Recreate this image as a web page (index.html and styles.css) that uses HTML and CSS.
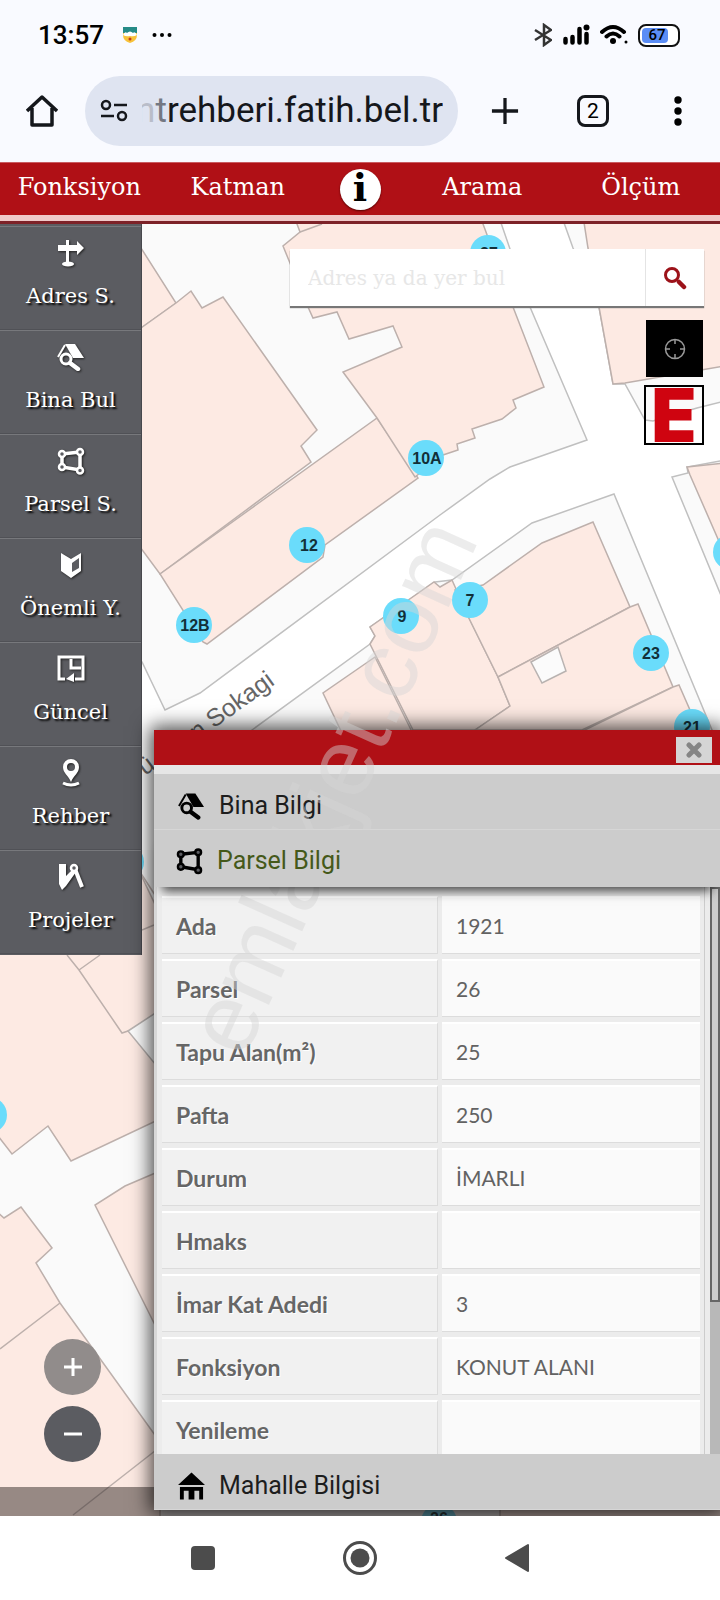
FILE: index.html
```html
<!DOCTYPE html>
<html lang="tr">
<head>
<meta charset="utf-8">
<meta name="viewport" content="width=device-width, initial-scale=1">
<title>Fatih Kent Rehberi</title>
<link rel="stylesheet" href="styles.css">
</head>
<body>
<svg class="defs" width="0" height="0" aria-hidden="true">
  <symbol id="i-house-search" viewBox="0 0 28 28">
    <path d="M8 1h10l9 14H16z" fill="currentColor"/>
    <path d="M8 2 1 14" stroke="currentColor" stroke-width="2" fill="none"/>
    <circle cx="9" cy="16" r="5" fill="none" stroke="currentColor" stroke-width="3"/>
    <path d="m13 20 8 6" stroke="currentColor" stroke-width="4.500" stroke-linecap="round"/>
  </symbol>
  <symbol id="i-parcel" viewBox="0 0 28 28">
    <path d="M5 7 23 5v18L5 20z" fill="none" stroke="currentColor" stroke-width="3.500"/>
    <g class="node"><circle cx="5" cy="7" r="3"/><circle cx="23" cy="5" r="3"/><circle cx="23" cy="23.500" r="3"/><circle cx="5" cy="20" r="3"/></g>
  </symbol>
</svg>
<div class="screen">
  <header class="status">
    <div class="status-side">
      <time class="clock">13:57</time>
      <svg class="shield" viewBox="0 0 16 18" aria-hidden="true"><path d="M1 1h14v8q0 6-7 8-7-2-7-8z" fill="#f8c23a"/><path d="M1 1h14v6H1z" fill="#268a87"/><path d="M1 9q2-4 4-2 3-3 6 0 2-2 4 2-3 2-7 1-4 1-7-1z" fill="#fff"/><circle cx="8" cy="13" r="1.500" fill="#c43c1b"/></svg>
      <svg class="more" viewBox="0 0 20 6" aria-hidden="true"><circle cx="2.500" cy="3" r="2"/><circle cx="10" cy="3" r="2"/><circle cx="17.500" cy="3" r="2"/></svg>
    </div>
    <div class="status-side">
      <svg width="18" height="24" viewBox="0 0 18 24" aria-hidden="true"><path d="M1 7l16 10-7 5V2l7 5L1 17" fill="none" stroke="#333" stroke-width="2.500"/></svg>
      <svg width="28" height="22" viewBox="0 0 28 22" aria-hidden="true"><g stroke="#000" stroke-width="4.500" stroke-linecap="round"><path d="M3.500 15v3.500M10.500 13v5.500M17.500 5v13.500M24.500 10v8.500"/></g><circle cx="24.500" cy="3.500" r="3"/></svg>
      <svg width="28" height="22" viewBox="0 0 28 22" aria-hidden="true"><path d="M2 8q11-10 22 0M6.500 12.500q6.500-6 13 0" fill="none" stroke="#000" stroke-width="4" stroke-linecap="round"/><circle cx="13" cy="17" r="3"/><circle cx="26" cy="18" r="1.500"/></svg>
      <span class="battery"><span>67</span></span>
    </div>
  </header>

  <div class="browser">
    <button class="plain" aria-label="Ana sayfa"><svg width="32" height="34" viewBox="0 0 32 34"><path d="M1 17 16 3l15 14M6 14v17h20V14" fill="none" stroke="#15171c" stroke-width="3.500" stroke-linejoin="round"/></svg></button>
    <div class="address">
      <svg width="28" height="24" viewBox="0 0 28 24" aria-hidden="true"><g fill="none" stroke="#15171c" stroke-width="2.500"><circle cx="6" cy="6" r="4"/><circle cx="22" cy="17" r="4"/><path d="M14 6h13M1 17h13"/></g></svg>
      <a class="url" href="#"><span class="cut">n</span><span class="half">t</span>rehberi.fatih.bel.tr</a>
    </div>
    <button class="plain" aria-label="Yeni sekme"><svg width="28" height="28" viewBox="0 0 30 30"><path d="M15 1v28M1 15h28" stroke="#15171c" stroke-width="3.500"/></svg></button>
    <button class="tabs-count">2</button>
    <button class="plain" aria-label="Menü"><svg width="8" height="30" viewBox="0 0 8 30"><circle cx="4" cy="4" r="3.700"/><circle cx="4" cy="15" r="3.700"/><circle cx="4" cy="26" r="3.700"/></svg></button>
  </div>

  <nav class="topnav">
    <a href="#">Fonksiyon</a>
    <a href="#">Katman</a>
    <a href="#" class="info" aria-label="Bilgi"><span>i</span></a>
    <a href="#">Arama</a>
    <a href="#">Ölçüm</a>
  </nav>

  <main class="stage">
    <svg class="map" viewBox="0 224 720 1292" preserveAspectRatio="xMinYMin slice" role="img" aria-label="Harita">
      <rect x="0" y="224" width="720" height="1292" fill="#fff"/>
      <g class="parcel">
        <path d="M-5 220H500L530 307 587 440 510 467 490 479 440 515 200 693 165 710 142 662-5 640z"/>
        <path d="M252 730 370 644 375 636 370 627 435 582 452 580 532 523 614 494 712 730 680 800H200z"/>
        <path d="M563 220 573 248 599 307 613 384 625 384 645 420 653 421 697 408 725 401V220z"/>
        <path d="M725 460 687 467 688 473 672 477 725 605z"/>
        <path class="ground" d="M-5 850H725V1520H-5z"/>
      </g>
      <g class="building">
        <path d="M120 215 176 303 120 343z"/>
        <path d="M120 343 176 303 191 291 202 308 223 297 317 430 301 446 311 462 160 574 120 520z"/>
        <path d="M160 574 377 418 418 478 325 545 323 557 207 644 203 642z"/>
        <path d="M294 216 300 232 283 246 308 307 313 318 337 312 349 339 393 326 402 347 343 372 377 418 415 477 443 455 458 450 457 444 475 438 472 429 502 419 516 408 513 400 544 387 513 307 486 232 480 216z"/>
        <path d="M583 216 588 248 599 307 613 384 625 383 725 366V216z"/>
        <path d="M687 467 725 463V555L690 475z"/>
        <path d="M370 627 434 582 440 587 452 580 469 618 498 677 510 706 475 730 413 730 370 644 375 636z"/>
        <path d="M375 657 323 693 350 750H421z"/>
        <path d="M455 590 498 677 630 607 593 522 542 543 483 585z"/>
        <path d="M498 677 630 607 638 604 673 687 582 730 475 730 510 706z"/>
        <path d="M673 687 679 685 704 742H560z"/>
        <path d="M-5 870 142 877 160 915V1119L71 1161 48 1126 12 1154-5 1132z"/>
        <path d="M-5 1210 4 1218 21 1207 52 1248 36 1263 60 1303 160 1442V1520H-5z"/>
        <path d="M160 1171 125 1186 95 1205 160 1335z"/>
        <path d="M500 1480H725V1520H500z"/>
      </g>
      <g class="courtyard">
        <path d="M531 662 558 647 566 671 542 683z"/>
        <path d="M128 1031 160 1010V1070z"/>
      </g>
      <path class="edge" d="M67 955 79 970 122 1033 128 1031M79 970 100 955M0 1349 60 1303M73 1515 160 1447M142 930 154 925M140 872 155 895M300 232 322 224"/>
      <text class="street" transform="translate(197 741) rotate(-36)">n Sokagi</text>
      <text class="street" transform="translate(145 776) rotate(-36)">ü</text>
      <g class="pin">
        <circle cx="488" cy="253" r="18"/><text x="489" y="259">37</text>
        <circle cx="426" cy="458" r="18"/><text x="427" y="464">10A</text>
        <circle cx="307" cy="545" r="18"/><text x="309" y="551">12</text>
        <circle cx="194" cy="625" r="18"/><text x="195" y="631">12B</text>
        <circle cx="401" cy="616" r="18"/><text x="402" y="622">9</text>
        <circle cx="470" cy="600" r="18"/><text x="470" y="606">7</text>
        <circle cx="651" cy="653" r="18"/><text x="651" y="659">23</text>
        <circle cx="692" cy="727" r="18"/><text x="692" y="733">21</text>
        <circle cx="731" cy="552" r="18"/>
        <circle cx="-11" cy="1115" r="18"/>
        <circle cx="126" cy="862" r="18"/>
        <circle cx="439" cy="1522" r="18"/><text x="439" y="1524">26</text>
      </g>
    </svg>
    <div class="map-footer"></div>

    <aside class="sidebar">
      <button><svg viewBox="0 0 28 28"><path d="M1 6h19V2l7 7-7 7v-4H1zM9 1h3v22H9z" fill="#fff"/><ellipse cx="11" cy="25" rx="6" ry="2.500" fill="#fff"/></svg>Adres S.</button>
      <button><svg><use href="#i-house-search"/></svg>Bina Bul</button>
      <button><svg><use href="#i-parcel"/></svg>Parsel S.</button>
      <button><svg viewBox="0 0 28 28"><path d="M4 2 14 8 24 2v18L14 27 4 20z" fill="#fff"/><path d="m15 12 7-5v10l-7 4z" fill="#5b5c61"/></svg>Önemli Y.</button>
      <button><svg viewBox="0 0 28 28"><path d="M8 24H2V2h24v22h-8M14 4v9h10" fill="none" stroke="#fff" stroke-width="3"/><path d="m9 24 8-6v9z" fill="#fff"/></svg>Güncel</button>
      <button><svg viewBox="0 0 28 28"><path d="M14 0a8 8 0 0 0-8 8c0 6 5 8 8 15 3-7 8-9 8-15a8 8 0 0 0-8-8zm0 4a4 4 0 1 1 0 8 4 4 0 0 1 0-8z" fill="#fff" fill-rule="evenodd"/><path d="M6 24q8 4 16 0" fill="none" stroke="#fff" stroke-width="3"/></svg>Rehber</button>
      <button><svg viewBox="0 0 28 28"><path d="M2 1h7v12l7-7 3 3-10 14-4 4-3-6z" fill="#fff"/><path d="m18 6 7 18" stroke="#fff" stroke-width="4"/><circle cx="17" cy="5" r="3" fill="#5b5c61" stroke="#fff" stroke-width="2.500"/></svg>Projeler</button>
    </aside>

    <div class="tools">
      <form class="search">
        <input type="text" aria-label="Adres ya da yer bul" placeholder="Adres ya da yer bul">
        <button type="button" aria-label="Ara"><svg width="24" height="24" viewBox="0 0 24 24"><circle cx="9" cy="9" r="6.500" fill="none" stroke="#9c1219" stroke-width="3"/><path d="m14 14 2 2" stroke="#9c1219" stroke-width="2"/><path d="m16 16 5 5" stroke="#9c1219" stroke-width="4.500" stroke-linecap="round"/></svg></button>
      </form>
      <button class="locate" aria-label="Konum"><svg width="24" height="24" viewBox="0 0 24 24"><g fill="none" stroke="#999" stroke-width="1.500"><circle cx="12" cy="12" r="9.500"/><path d="M12 2v5M12 17v5M2 12h5M17 12h5"/></g></svg></button>
      <button class="pharmacy" aria-label="Eczane">E</button>
    </div>

    <div class="zoom">
      <button class="in" aria-label="Yakınlaştır"><svg width="20" height="20" viewBox="0 0 20 20"><path d="M10 1v18M1 10h18" stroke="#fff" stroke-width="3"/></svg></button>
      <button class="out" aria-label="Uzaklaştır"><svg width="20" height="20" viewBox="0 0 20 20"><path d="M1 10h18" stroke="#fff" stroke-width="3"/></svg></button>
    </div>

    <section class="panel">
      <div class="panel-bar"><button aria-label="Kapat"><svg width="16" height="16" viewBox="0 0 16 16"><path d="m3 3 10 10M13 3 3 13" stroke="#858585" stroke-width="5" stroke-linecap="round"/></svg></button></div>
      <button class="fold"><svg><use href="#i-house-search"/></svg>Bina Bilgi</button>
      <button class="fold active"><svg><use href="#i-parcel"/></svg>Parsel Bilgi</button>
      <div class="panel-body">
        <div class="grid-wrap">
        <table>
          <tbody>
            <tr><th scope="row">Ada</th><td>1921</td></tr>
            <tr><th scope="row">Parsel</th><td>26</td></tr>
            <tr><th scope="row">Tapu Alan(m²)</th><td>25</td></tr>
            <tr><th scope="row">Pafta</th><td>250</td></tr>
            <tr><th scope="row">Durum</th><td>İMARLI</td></tr>
            <tr><th scope="row">Hmaks</th><td></td></tr>
            <tr><th scope="row">İmar Kat Adedi</th><td>3</td></tr>
            <tr><th scope="row">Fonksiyon</th><td>KONUT ALANI</td></tr>
            <tr><th scope="row">Yenileme</th><td></td></tr>
          </tbody>
        </table>
        </div>
        <div class="track"><div class="thumb"></div></div>
      </div>
      <button class="fold"><svg viewBox="0 0 28 28"><path d="M14 0 28 13H0zM2 15h24v13h-4v-9h-5v9h-6v-9H6v9H2z" fill="#000"/></svg>Mahalle Bilgisi</button>
    </section>
  </main>

  <footer class="sysnav">
    <button class="plain" aria-label="Son uygulamalar"><svg width="36" height="36" viewBox="0 0 36 36"><rect x="6" y="6" width="24" height="24" rx="4" fill="#4c4c4c"/></svg></button>
    <button class="plain" aria-label="Ana ekran"><svg width="36" height="36" viewBox="0 0 36 36"><circle cx="18" cy="18" r="15.500" fill="none" stroke="#4c4c4c" stroke-width="3"/><circle cx="18" cy="18" r="9.500" fill="#4c4c4c"/></svg></button>
    <button class="plain" aria-label="Geri"><svg width="36" height="36" viewBox="0 0 36 36"><path d="M7 18 29 5v26z" fill="#4c4c4c" stroke="#4c4c4c" stroke-width="2" stroke-linejoin="round"/></svg></button>
  </footer>
  <svg class="watermark" viewBox="0 0 720 1600" preserveAspectRatio="xMinYMin meet" aria-hidden="true"><text transform="translate(244 1060) rotate(-65.700)">emlakjet.com</text></svg>
</div>
</body>
</html>
```
FILE: styles.css
```css
* { box-sizing: border-box; }
body { margin: 0; background: #fff; font-family: Roboto, sans-serif; }
button { margin: 0; padding: 0; border: 0; background: none; font: inherit; color: inherit; }
a { color: inherit; text-decoration: none; }
svg { display: block; flex: none; }
.defs { position: absolute; }

.screen { position: relative; display: flex; flex-direction: column; min-height: 100vh; overflow: hidden; }

.status { height: 70px; padding: 0 40px 0 38px; background: #f9faff; display: flex; justify-content: space-between; align-items: center; }
.status-side { display: flex; align-items: center; gap: 10px; }
.clock { font-size: 26px; font-weight: 500; line-height: 32px; }
.shield { width: 16px; height: 18px; margin-left: 8px; }
.more { width: 20px; height: 6px; margin-left: 4px; }
.battery { width: 42px; height: 23px; border: 2px solid #111; border-radius: 8px; padding: 2px; background: #fff; }
.battery span { display: block; width: 26px; height: 15px; padding-left: 4px; border-radius: 4px; background: #5b8df5; font-size: 15px; font-weight: 500; line-height: 15px; text-align: center; }

.browser { height: 92px; padding: 0 38px 10px 26px; background: #f9faff; display: flex; align-items: center; }
.browser .plain { flex: none; }
.address { flex: 1; height: 70px; margin: 0 33px 0 27px; padding: 0 15px; border-radius: 35px; background: #dfe4f1; display: flex; align-items: center; gap: 14px; overflow: hidden; }
.url { flex: 1; min-width: 0; display: flex; justify-content: flex-end; overflow: hidden; font-size: 35px; line-height: 44px; color: #15171c; white-space: nowrap; }
.cut { color: #b9bdc9; }
.half { color: #747883; }
.tabs-count { flex: none; width: 32px; height: 32px; margin: 0 65px 0 58px; border: 3px solid #15171c; border-radius: 8px; font-size: 21px; line-height: 26px; text-align: center; }

.topnav { height: 62px; padding-top: 2px; background: #b01016; border-top: 1px solid #c95a60; border-bottom: 3px solid #7d2228; box-shadow: inset 0 -6px #f0c9c9; display: grid; grid-template-columns: 1fr 1fr 86px 1fr 1fr; align-items: start; justify-items: center; color: #fff; font-family: "DejaVu Serif", serif; font-size: 24px; line-height: 44px; }
.info { padding-top: 4px; }
.info span { display: block; width: 41px; height: 41px; border-radius: 50%; background: #fff; color: #000; font-size: 38px; font-weight: 700; line-height: 38px; text-align: center; box-shadow: 0 1px 2px #500; }

.stage { position: relative; flex: 1; min-height: 1292px; overflow: hidden; }
.map { position: absolute; inset: 0; width: 100%; height: 100%; }
.parcel path { fill: #fafafa; stroke: #c0c0c0; stroke-width: 1.500px; }
.parcel .ground { stroke: none; }
.building path { fill: #fdeae3; stroke: #bdb0ac; stroke-width: 1.500px; }
.courtyard path { fill: #fbfbfb; stroke: #b9b3b1; stroke-width: 1.500px; }
.edge { fill: none; stroke: #bdb0ac; stroke-width: 1.500px; }
.street { font: 25px "Liberation Sans", sans-serif; fill: #666; }
.pin circle { fill: #6adcfb; }
.pin text { font: 700 16px "Liberation Sans", sans-serif; text-anchor: middle; fill: #123039; }
.map-footer { position: absolute; left: 0; right: 0; bottom: 0; height: 29px; background: rgba(50, 40, 38, .5); }

.sidebar { position: absolute; top: 0; left: 0; width: 142px; padding: 2px 0 1px; background: #5b5c61; border-right: 1px solid #47484d; }
.sidebar button { width: 100%; height: 104px; padding-top: 12px; border-top: 1px solid #77787c; border-bottom: 1px solid #505156; display: flex; flex-direction: column; align-items: center; gap: 13px; color: #fff; font-family: "DejaVu Serif", serif; font-size: 21px; line-height: 32px; text-shadow: 2px 2px 2px #000; }
.sidebar svg { width: 28px; height: 28px; filter: drop-shadow(1px 1px 1px #222); }
.node circle { fill: #5b5c61; stroke: currentColor; stroke-width: 2.500px; }

.tools { position: absolute; top: 25px; left: 290px; right: 16px; display: flex; flex-direction: column; align-items: flex-end; }
.search { display: flex; width: 100%; height: 57px; padding-right: 1px; margin-bottom: 14px; background: #fff; box-shadow: 0 2px 1px #777; }
.search input { flex: 1; min-width: 0; padding: 0 18px; border: 0; border-right: 1px solid #e4e4e4; background: none; font-family: "DejaVu Serif", serif; font-size: 20px; outline: 0; }
.search input::placeholder { color: #e7e7e7; opacity: 1; }
.search button { width: 57px; display: grid; place-items: center; }
.locate { width: 57px; height: 57px; margin: 0 1px 8px; background: #000; display: grid; place-items: center; }
.pharmacy { width: 60px; height: 60px; border: 2px solid #000; color: #cf0410; font-family: Inter, sans-serif; font-size: 74px; font-weight: 900; line-height: 56px; display: flex; justify-content: center; align-items: center; }

.zoom { position: absolute; left: 44px; bottom: 54px; display: grid; gap: 11px; }
.zoom button { width: 57px; height: 56px; border-radius: 50%; display: grid; place-items: center; }
.zoom .in { background: #918c8b; }
.zoom .out { background: #5b5c61; }

.panel { position: absolute; top: 506px; left: 154px; right: 0; bottom: 6px; display: flex; flex-direction: column; background: #ececec; box-shadow: 0 0 18px 4px rgba(0, 0, 0, .7); }
.panel-bar { flex: none; height: 44px; padding: 7px 8px 0; border-bottom: 9px solid #e6e6e6; background: #b01016; display: flex; justify-content: flex-end; }
.panel-bar button { width: 36px; height: 26px; background: #d5d5d5; display: grid; place-items: center; }
.fold { flex: none; position: relative; height: 56px; padding: 8px 24px 0; background: #ccc; border-bottom: 1px solid #d6d6d6; display: flex; align-items: center; gap: 14px; font-size: 25px; line-height: 32px; color: #1d1d1d; text-align: left; }
.fold svg { width: 27px; height: 28px; color: #000; }
.fold .node circle { fill: #ccc; }
.active { height: 57px; padding: 4px 22px 0; border-bottom: 0; color: #45591a; box-shadow: 0 12px 10px -8px rgba(0, 0, 0, .7); z-index: 1; }
.panel-body { flex: 1; min-height: 0; display: flex; overflow: hidden; border-left: 3px solid #d7d7d7; }
.grid-wrap { flex: 1; min-width: 0; padding: 4px 0 0 1px; border-right: 1px solid #ccc; }
table { width: 100%; border-collapse: separate; border-spacing: 4px 5px; table-layout: fixed; color: #626262; font-family: Lato, sans-serif; font-size: 23px; line-height: 28px; text-align: left; }
th, td { height: 58px; padding: 0 14px; border-top: 2px solid #fff; border-bottom: 1px solid #dcdcdc; }
th { width: 276px; background: #f1f1f1; border-right: 1px solid #dcdcdc; font-weight: 700; color: #666; text-shadow: 1px 1px #fff; }
td { background: #fafafa; font-size: 21px; }
.track { width: 10px; margin-left: 5px; background: #b8b8b8; }
.thumb { height: 415px; background: #cdcdcd; border: 2px solid #666; }

.sysnav { height: 84px; padding: 0 185px; background: #fff; display: flex; align-items: center; justify-content: space-between; }
.watermark { position: absolute; inset: 0; width: 100%; pointer-events: none; }
.watermark text { font: 97px "Liberation Sans", sans-serif; fill: rgba(212, 212, 212, .45); }
```
